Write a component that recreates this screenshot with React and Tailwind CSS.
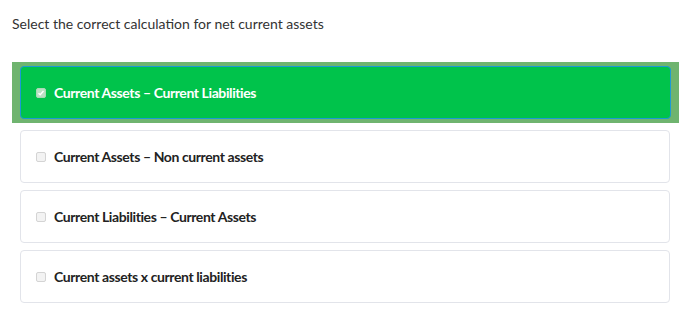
const options = [
  "Current Assets – Non current assets",
  "Current Liabilities – Current Assets",
  "Current assets x current liabilities",
];

const Box = ({ checked }) => (
  <span
    className={
      "flex h-[10px] w-[10px] items-center justify-center rounded-[2px] border " +
      (checked ? "border-[#a9d9b5] bg-[#b9e0c3]" : "border-[#d4d4d4] bg-[#f3f3f3]")
    }
  >
    {checked && (
      <svg width="8" height="8" viewBox="0 0 8 8">
        <path d="M1.5 4.2 L3.2 5.8 L6.5 2" fill="none" stroke="#fff" strokeWidth="1.4" />
      </svg>
    )}
  </span>
);

export default function App() {
  return (
    <div className="h-[322px] w-[690px] bg-white font-['Lato',sans-serif]">
      <p className="px-3 pt-[15px] text-[14px] leading-[18px] text-[#333]">
        Select the correct calculation for net current assets
      </p>
      <div className="mt-[29px] ml-3 mr-[11px] bg-[#6fb46f] px-2 py-1">
        <label className="flex h-[53px] items-center gap-2 rounded-[4px] border border-[#1b9ad6] bg-[#00c34b] pl-[15px]">
          <Box checked />
          <span className="text-[14px] font-bold tracking-[-0.4px] text-white">
            Current Assets – Current Liabilities
          </span>
        </label>
      </div>
      <div className="mt-[7px] flex flex-col gap-[7px] pl-5 pr-5">
        {options.map((o) => (
          <label
            key={o}
            className="flex h-[53px] items-center gap-2 rounded-[4px] border border-[#e2e4ea] bg-white pl-[15px]"
          >
            <Box />
            <span className="text-[14px] font-bold tracking-[-0.4px] text-[#222]">{o}</span>
          </label>
        ))}
      </div>
    </div>
  );
}
